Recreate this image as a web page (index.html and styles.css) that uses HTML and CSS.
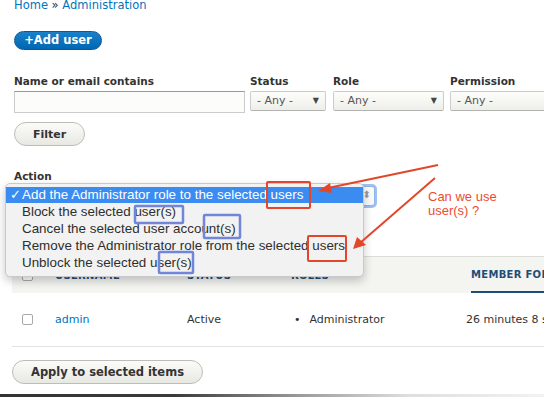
FILE: index.html
```html
<!DOCTYPE html>
<html>
<head>
<meta charset="utf-8">
<link rel="stylesheet" href="styles.css">
</head>
<body>
<div class="page">
  <nav class="breadcrumb"><a href="#">Home</a> » <a href="#">Administration</a></nav>
  <a class="btn-primary" href="#">+Add user</a>
  <div class="filters">
    <div class="field f-name">
      <label>Name or email contains</label>
      <div class="text-input"></div>
    </div>
    <div class="field f-status">
      <label>Status</label>
      <div class="select">- Any -<span class="caret">▼</span></div>
    </div>
    <div class="field f-role">
      <label>Role</label>
      <div class="select">- Any -<span class="caret">▼</span></div>
    </div>
    <div class="field f-perm">
      <label>Permission</label>
      <div class="select">- Any -<span class="caret">▼</span></div>
    </div>
  </div>
  <button class="btn btn-filter">Filter</button>
  <div class="action">
    <label>Action</label>
    <div class="action-select"><span class="arrows">⬍</span></div>
  </div>
  <table class="users">
    <thead>
      <tr>
        <th class="c-check"><span class="checkbox"></span></th>
        <th class="c-name">USERNAME</th>
        <th class="c-status">STATUS</th>
        <th class="c-roles">ROLES</th>
        <th class="c-member"><div class="sorted">MEMBER FOR</div></th>
      </tr>
    </thead>
    <tbody>
      <tr>
        <td class="c-check"><span class="checkbox"></span></td>
        <td class="c-name"><a href="#">admin</a></td>
        <td class="c-status">Active</td>
        <td class="c-roles"><span class="bullet">•</span>Administrator</td>
        <td class="c-member">26 minutes 8 seconds</td>
      </tr>
    </tbody>
  </table>
  <button class="btn btn-apply">Apply to selected items</button>
</div>

<div class="popup">
  <div class="opt selected"><span class="check">✓</span>Add the Administrator role to the selected users</div>
  <div class="opt">Block the selected user(s)</div>
  <div class="opt">Cancel the selected user account(s)</div>
  <div class="opt">Remove the Administrator role from the selected users</div>
  <div class="opt">Unblock the selected user(s)</div>
</div>

<svg class="annot" width="544" height="397" viewBox="0 0 544 397">
  <g fill="none" stroke="#e2472b" stroke-width="2">
    <rect x="267" y="182" width="43" height="26" rx="1"/>
    <rect x="308" y="236" width="38" height="25" rx="1"/>
    <line x1="438" y1="165" x2="328" y2="188"/>
    <line x1="435" y1="178" x2="360" y2="243"/>
  </g>
  <g fill="#e2472b">
    <polygon points="318,191 330,183 332,193"/>
    <polygon points="353,249 357,237 366,245"/>
  </g>
  <g fill="none" stroke="#7185d9" stroke-width="2.5">
    <rect x="135" y="206" width="48" height="17" rx="1"/>
    <rect x="204" y="215" width="36" height="23" rx="1"/>
    <rect x="159" y="252" width="34" height="21" rx="1"/>
  </g>
</svg>
<div class="note">Can we use<br>user(s) ?</div>
<div class="bottom-edge"></div>
</body>
</html>
```

FILE: styles.css
```css
html, body {
  margin: 0;
  padding: 0;
  overflow: hidden;
  width: 544px;
  height: 397px;
  background: #fff;
}
body {
  font-family: "DejaVu Sans", "Liberation Sans", sans-serif;
  font-size: 11px;
  color: #333;
  position: relative;
}
a { color: #0074bd; text-decoration: none; }

.page {
  padding-left: 14px;
}
.breadcrumb {
  font-size: 11.5px;
  line-height: 14px;
  margin-top: -2px;
  height: 13px;
}
.btn-primary {
  display: inline-block;
  margin-top: 20px;
  height: 19px;
  width: 88px;
  box-sizing: border-box;
  text-align: center;
  border-radius: 10px;
  background: linear-gradient(#1a80c9, #0067b2);
  border: 1px solid #0a5a99;
  color: #fff;
  font-weight: bold;
  font-size: 11.5px;
  line-height: 17px;
}

.filters {
  display: flex;
  margin-top: 24px;
  align-items: flex-start;
}
.field { flex-shrink: 0; }
.field label {
  display: block;
  font-weight: bold;
  font-size: 10.5px;
  line-height: 14px;
  height: 14px;
  margin-bottom: 3px;
  color: #333;
}
.f-name { width: 231px; margin-right: 5px; }
.f-status { width: 76px; margin-right: 7px; }
.f-role { width: 111px; margin-right: 6px; }
.f-perm { width: 120px; }
.text-input {
  height: 22px;
  box-sizing: border-box;
  border: 1px solid #ccc;
  border-top-color: #999;
  background: #fcfcfa;
}
.select {
  position: relative;
  margin-top: 1px;
  height: 20px;
  box-sizing: border-box;
  border: 1px solid #ccc;
  border-bottom-color: #b3b3b3;
  border-radius: 2px;
  background: linear-gradient(#fdfdfb, #eeeee9);
  font-size: 11px;
  line-height: 18px;
  padding-left: 6px;
  color: #555;
}
.caret {
  position: absolute;
  right: 6px;
  top: 0;
  font-size: 8px;
  color: #444;
}

.btn {
  display: block;
  font-family: "DejaVu Sans", sans-serif;
  font-weight: bold;
  font-size: 11px;
  color: #333;
  border: 1px solid #bdbdb8;
  border-radius: 12px;
  background: linear-gradient(#fbfbf9, #e8e8e3);
  padding: 0;
  box-sizing: border-box;
}
.btn-filter {
  margin-top: 9px;
  width: 71px;
  height: 24px;
}
.action {
  margin-top: 23px;
}
.action label {
  display: block;
  font-weight: bold;
  font-size: 10.5px;
  line-height: 14px;
  height: 14px;
}
.action-select {
  position: relative;
  margin-top: 3px;
  width: 361px;
  height: 20px;
  box-sizing: border-box;
  border: 1px solid #8fb4e8;
  border-radius: 3px;
  box-shadow: 0 0 0 2px #9cc1f2;
  background: #fafafa;
}
.arrows {
  position: absolute;
  right: 3px;
  top: 2px;
  font-size: 10px;
  color: #999;
}

.users {
  margin-top: 50px;
  margin-left: -2px;
  border-collapse: collapse;
  width: 620px;
  table-layout: fixed;
}
.users thead tr {
  background: #f4f4f1;
  border-top: 1px solid #dcdcd8;
}
.users th {
  height: 35px;
  padding: 0;
  text-align: left;
  font-size: 10px;
  font-weight: bold;
  letter-spacing: 0.3px;
  color: #1d4e7a;
  vertical-align: middle;
}
.users td {
  height: 53px;
  padding: 0;
  vertical-align: middle;
  border-bottom: 1px solid #e4e3df;
  font-size: 11px;
  color: #333;
}
.c-check { width: 43px; }
.c-name { width: 132px; }
.c-status { width: 103px; }
.c-roles { width: 175px; }
.c-check .checkbox {
  display: block;
  margin-left: 10px;
  width: 11px;
  height: 11px;
  box-sizing: border-box;
  border: 1px solid #a9a9a9;
  border-radius: 2px;
  background: #fff;
}
.users td.c-roles { padding-left: 4px; }
.users th.c-roles { padding-left: 1px; }
.bullet { margin-right: 9px; }
.users th.c-member { padding: 0; }
.sorted {
  margin-left: 5px;
  height: 34px;
  line-height: 36px;
  border-bottom: 2px solid #1d4e7a;
}
.btn-apply {
  margin-top: 13px;
  margin-left: -2px;
  width: 191px;
  height: 24px;
  font-size: 11.5px;
}

.popup {
  position: absolute;
  left: 5px;
  top: 183px;
  width: 359px;
  height: 94px;
  box-sizing: border-box;
  padding-top: 3px;
  background: #f2f2f2;
  border: 1px solid #c9c9c9;
  border-radius: 5px;
  box-shadow: 0 4px 10px rgba(0,0,0,0.22);
  font-family: "Liberation Sans", Arial, sans-serif;
  font-size: 13.4px;
  color: #2e2e2e;
}
.opt {
  height: 17px;
  line-height: 17px;
  padding-left: 16px;
  white-space: nowrap;
}
.opt.selected {
  background: #3b8cf1;
  color: #fff;
  padding-left: 2px;
  height: 16px;
  line-height: 16px;
}
.check {
  display: inline-block;
  width: 14px;
  text-align: center;
}

.annot {
  position: absolute;
  left: 0;
  top: 0;
  pointer-events: none;
}
.note {
  position: absolute;
  left: 428px;
  top: 190px;
  font-family: "Liberation Sans", Arial, sans-serif;
  font-size: 13px;
  line-height: 14px;
  color: #ee4b2f;
}
.bottom-edge {
  position: absolute;
  left: 0;
  top: 394px;
  width: 544px;
  height: 3px;
  background: linear-gradient(90deg, #333 0%, #3a3a3a 32%, #9a9a9a 55%, #dedede 75%, #f2f2f2 100%);
}
```
